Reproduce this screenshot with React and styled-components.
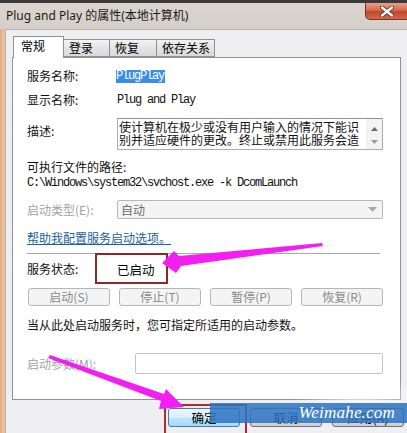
import React from 'react';
import styled, { createGlobalStyle } from 'styled-components';

const Global = createGlobalStyle`
  html, body { margin: 0; padding: 0; background: #f0f0f0; }
  body { font-family: "Noto Sans CJK SC", "Noto Sans", sans-serif; }
  * { box-sizing: border-box; }
`;

const Screen = styled.div`
  position: relative;
  width: 407px;
  height: 433px;
  overflow: hidden;
  display: flex;
  flex-direction: column;
  background: linear-gradient(to right, #dcae88 0, #ecc6a6 5px, #d8d2cc 5px);
`;

const TopStrip = styled.div`
  height: 3px;
  background: #3b3a3a;
  flex: none;
`;

const TitleBar = styled.div`
  height: 26px;
  flex: none;
  display: flex;
  align-items: flex-start;
  justify-content: space-between;
  background: linear-gradient(to bottom, #dcd5ce, #d8d2cc 60%, #d4cec8);
  padding-left: 6px;
`;

const TitleText = styled.div`
  font-family: "Noto Sans", "Noto Sans CJK SC", sans-serif;
  font-size: 12px;
  line-height: 16px;
  margin-top: 5px;
  color: #1a1a1a;
`;

const CloseButton = styled.div`
  width: 44px;
  height: 17px;
  margin-right: -2px;
  display: flex;
  align-items: center;
  justify-content: center;
  border: 1px solid #7a3327;
  border-top: none;
  border-radius: 0 0 0 5px;
  background: linear-gradient(to bottom, #e9a08a 0%, #d46a4c 45%, #c2452a 55%, #d26a48 100%);
`;

const Client = styled.div`
  flex: 1;
  margin-left: 5px;
  background: #efeef0;
  border-top: 1px solid #b8b2ac;
  border-left: 1px solid #b8aea4;
  padding: 6px 0 0 6px;
  display: flex;
  flex-direction: column;
`;

const TabStrip = styled.div`
  display: flex;
  align-items: flex-end;
  height: 21px;
  margin-left: 1px;
  position: relative;
  z-index: 1;
`;

const Tab = styled.div`
  width: ${p => p.$w}px;
  height: ${p => (p.$active ? 22 : 18)}px;
  margin-bottom: ${p => (p.$active ? -1 : 0)}px;
  margin-left: ${p => (p.$first ? 0 : -1)}px;
  padding-left: ${p => (p.$active ? 7 : 5)}px;
  border: 1px solid #8e9196;
  border-bottom: ${p => (p.$active ? 'none' : '1px solid #8e9196')};
  background: ${p =>
    p.$active ? '#ffffff' : 'linear-gradient(to bottom, #f3f3f3, #e4e4e4 50%, #d9d9d9)'};
  font-size: 12px;
  line-height: ${p => (p.$active ? 18 : 16)}px;
  color: #000;
`;

const Panel = styled.div`
  width: 389px;
  height: 343px;
  background: #ffffff;
  border: 1px solid #8e9196;
  padding: 10px 17px 0 14px;
  display: flex;
  flex-direction: column;
`;

const Row = styled.div`
  display: flex;
  align-items: ${p => p.$align || 'center'};
  height: ${p => p.$h}px;
  margin-top: ${p => p.$mt || 0}px;
  flex: none;
`;

const Label = styled.div`
  width: ${p => p.$w || 90}px;
  flex: none;
  font-size: 12px;
  line-height: 16px;
  color: ${p => (p.$disabled ? '#a2a2a2' : '#111')};
  padding-top: ${p => p.$pt || 0}px;
`;

const Mono = styled.span`
  font-family: "Liberation Mono", monospace;
  font-size: 12px;
  letter-spacing: -1.2px;
  line-height: 13px;
  color: ${p => (p.$selected ? '#ffffff' : '#111')};
  background: ${p => (p.$selected ? '#3a8ee6' : 'transparent')};
  padding: 0 ${p => (p.$selected ? 1 : 0)}px 0 0;
  margin-left: ${p => (p.$selected ? -1 : 0)}px;
  white-space: pre;
`;

const DescBox = styled.div`
  width: 266px;
  height: 32px;
  border: 1px solid #abadb3;
  border-top-color: #8d9096;
  display: flex;
`;

const DescText = styled.div`
  flex: 1;
  font-size: 12px;
  line-height: 13px;
  padding: 1px 0 0 1px;
  color: #111;
  white-space: nowrap;
`;

const ScrollBar = styled.div`
  width: 16px;
  flex: none;
  background: #f3f3f3;
  display: flex;
  flex-direction: column;
  justify-content: space-between;
  align-items: center;
  padding: 8px 0 5px;
`;

const Select = styled.div`
  width: 266px;
  height: 19px;
  border: 1px solid #b8b8b8;
  border-radius: 2px;
  background: #f4f4f4;
  display: flex;
  align-items: center;
  justify-content: space-between;
  padding: 0 5px 0 3px;
  font-size: 12px;
  color: #6e6e6e;
`;

const Link = styled.a`
  font-size: 12px;
  line-height: 16px;
  color: #1c5fa0;
  text-decoration: underline;
  cursor: pointer;
`;

const Separator = styled.div`
  height: 1px;
  background: #a8a8a8;
  margin: 7px 3px 0 0;
  flex: none;
`;

const StatusValue = styled.div`
  position: relative;
  font-size: 12.5px;
  line-height: 16px;
  color: #000;
  padding-top: 2px;
  &::before {
    content: "";
    position: absolute;
    left: -22px;
    top: -7px;
    width: 69px;
    height: 27px;
    border: 2.5px solid #8c2828;
  }
`;

const ButtonGrid = styled.div`
  display: grid;
  grid-template-columns: repeat(4, 1fr);
  gap: 9px;
  margin: 6px 0 0 1px;
  height: 18px;
  flex: none;
`;

const DisabledButton = styled.div`
  border: 1px solid #b4b6b9;
  border-radius: 3px;
  background: #f4f4f4;
  color: #8a8a8a;
  font-size: 12px;
  line-height: 16px;
  text-align: center;
`;

const Text = styled.div`
  font-size: 12px;
  line-height: 16px;
  color: #111;
  margin-top: ${p => p.$mt || 0}px;
`;

const Input = styled.div`
  flex: 1;
  height: 21px;
  border: 1px solid #c4c4c4;
  border-radius: 2px;
  background: #fff;
`;

const Footer = styled.div`
  display: flex;
  justify-content: flex-end;
  gap: 10px;
  padding: 8px 3px 0 0;
`;

const FocusWrap = styled.div`
  position: relative;
  &::after {
    content: "";
    position: absolute;
    left: -4px;
    top: -4px;
    width: 79px;
    height: 28px;
    border: 2.5px solid #b8282c;
  }
`;

const DialogButton = styled.div`
  width: 72px;
  height: 19px;
  border: 1px solid ${p => (p.$focus ? '#3c7fb1' : '#707070')};
  border-radius: 3px;
  background: ${p =>
    p.$focus
      ? 'linear-gradient(to bottom, #eaf6fd, #d9f0fc 50%, #bee6fd 51%, #a7d9f5)'
      : 'linear-gradient(to bottom, #f2f2f2, #ebebeb 50%, #dddddd 51%, #cfcfcf)'};
  font-size: 12.5px;
  line-height: 17px;
  text-align: center;
  color: #000;
`;

const Overlay = styled.svg`
  position: absolute;
  left: 0;
  top: 0;
  pointer-events: none;
`;

const Watermark = styled.div`
  position: absolute;
  left: 210px;
  top: 403px;
  width: 197px;
  height: 20px;
  background: rgba(45, 115, 195, 0.86);
  display: flex;
  align-items: center;
  justify-content: flex-end;
  padding-right: 12px;
  font-family: "Liberation Serif", serif;
  font-style: italic;
  font-size: 17px;
  color: #ffffff;
  letter-spacing: 0.2px;
`;

const Haze = styled.div`
  position: absolute;
  left: 290px;
  top: 378px;
  width: 117px;
  height: 26px;
  background: radial-gradient(ellipse at 60% 70%, rgba(255,255,255,0.75), rgba(255,255,255,0) 70%);
`;

function CloseIcon() {
  return (
    <svg width="14" height="11" viewBox="0 0 14 11">
      <path d="M2 1.5 L12 9.5 M12 1.5 L2 9.5" stroke="#5a2a22" strokeWidth="4" strokeLinecap="round" />
      <path d="M2 1.5 L12 9.5 M12 1.5 L2 9.5" stroke="#ffffff" strokeWidth="2.4" strokeLinecap="round" />
    </svg>
  );
}

function Arrow({ up }) {
  return (
    <svg width="7" height="4" viewBox="0 0 7 4">
      <path d={up ? 'M0 4 L3.5 0 L7 4 Z' : 'M0 0 L7 0 L3.5 4 Z'} fill={up ? '#6a6a6a' : '#9a9a9a'} />
    </svg>
  );
}

function DropArrow() {
  return (
    <svg width="9" height="5" viewBox="0 0 9 5">
      <path d="M0 0 L9 0 L4.5 5 Z" fill="#a8a8a8" />
    </svg>
  );
}

export default function App() {
  return (
    <>
      <Global />
      <Screen>
        <TopStrip />
        <TitleBar>
          <TitleText>Plug and Play 的属性(本地计算机)</TitleText>
          <CloseButton>
            <CloseIcon />
          </CloseButton>
        </TitleBar>
        <Client>
          <TabStrip>
            <Tab $active $first $w={51}>常规</Tab>
            <Tab $w={47}>登录</Tab>
            <Tab $w={48}>恢复</Tab>
            <Tab $w={59}>依存关系</Tab>
          </TabStrip>
          <Panel>
            <Row $h={16}>
              <Label>服务名称:</Label>
              <Mono $selected>PlugPlay</Mono>
            </Row>
            <Row $h={16} $mt={8}>
              <Label>显示名称:</Label>
              <Mono>Plug and Play</Mono>
            </Row>
            <Row $h={32} $mt={10} $align="flex-start">
              <Label $pt={5}>描述:</Label>
              <DescBox>
                <DescText>
                  使计算机在极少或没有用户输入的情况下能识
                  <br />
                  别并适应硬件的更改。终止或禁用此服务会造
                </DescText>
                <ScrollBar>
                  <Arrow up />
                  <Arrow />
                </ScrollBar>
              </DescBox>
            </Row>
            <Text $mt={9}>可执行文件的路径:</Text>
            <Row $h={14} $mt={1}>
              <Mono>C:\Windows\system32\svchost.exe -k DcomLaunch</Mono>
            </Row>
            <Row $h={19} $mt={10}>
              <Label $disabled>启动类型(E):</Label>
              <Select>
                <span>自动</span>
                <DropArrow />
              </Select>
            </Row>
            <Row $h={16} $mt={11}>
              <Link>帮助我配置服务启动选项。</Link>
            </Row>
            <Separator />
            <Row $h={27} $mt={1}>
              <Label>服务状态:</Label>
              <StatusValue>已启动</StatusValue>
            </Row>
            <ButtonGrid>
              <DisabledButton>启动(S)</DisabledButton>
              <DisabledButton>停止(T)</DisabledButton>
              <DisabledButton>暂停(P)</DisabledButton>
              <DisabledButton>恢复(R)</DisabledButton>
            </ButtonGrid>
            <Text $mt={11}>当从此处启动服务时，您可指定所适用的启动参数。</Text>
            <Row $h={21} $mt={20}>
              <Label $disabled $w={108}>启动参数(M):</Label>
              <Input />
            </Row>
          </Panel>
          <Footer>
            <FocusWrap>
              <DialogButton $focus>确定</DialogButton>
            </FocusWrap>
            <DialogButton>取消</DialogButton>
            <DialogButton>应用(A)</DialogButton>
          </Footer>
        </Client>
        <Haze />
        <Watermark>Weimahe.com</Watermark>
        <Overlay width="407" height="433" viewBox="0 0 407 433">
          <polygon
            points="162,263 174,251 179,256 322,243 323,246 181,266 176,273"
            fill="#f21ff0"
          />
          <polygon
            points="184,407 159,409 161,401 48,358 50,355 164,394 166,389"
            fill="#f21ff0"
          />
        </Overlay>
      </Screen>
    </>
  );
}
